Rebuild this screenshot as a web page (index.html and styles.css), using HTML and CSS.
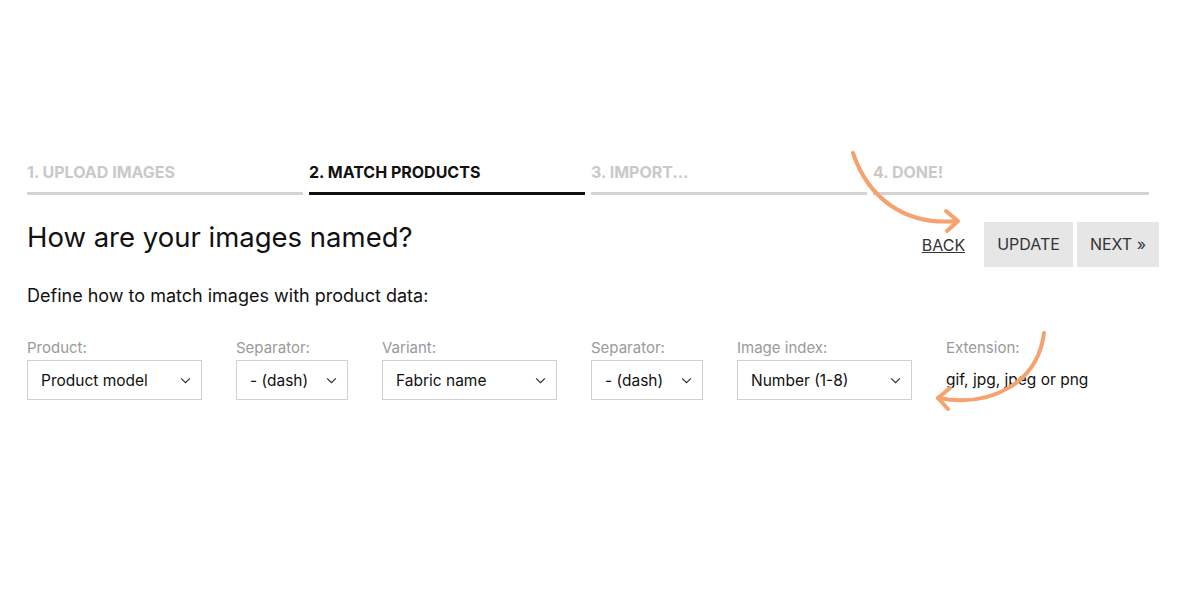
FILE: index.html
```html
<html lang="en">
  <head>
    <meta charset="UTF-8" />
    <title>Match products</title>
    <link rel="stylesheet" href="styles.css">
  </head>
  <body>
    <div class="wizard">
      <!-- steps -->
      <ol class="steps">
        <li>1. UPLOAD IMAGES</li>
        <li class="active">2. MATCH PRODUCTS</li>
        <li>3. IMPORT...</li>
        <li>4. DONE!</li>
      </ol>

      <div class="head">
        <h1>How are your images named?</h1>
        <div class="actions">
          <a href="#" class="back">BACK</a>
          <a href="#" class="btn">UPDATE</a>
          <a href="#" class="btn">NEXT &raquo;</a>
        </div>
      </div>

      <p class="intro">Define how to match images with product data:</p>

      <div class="fields">
        <div class="field wide">
          <label>Product:</label>
          <div class="select">Product model <svg viewBox="0 0 12 8"><path d="M1 1.5 L6 6.5 L11 1.5" /></svg></div>
        </div>
        <div class="field narrow">
          <label>Separator:</label>
          <div class="select">- (dash) <svg viewBox="0 0 12 8"><path d="M1 1.5 L6 6.5 L11 1.5" /></svg></div>
        </div>
        <div class="field wide">
          <label>Variant:</label>
          <div class="select">Fabric name <svg viewBox="0 0 12 8"><path d="M1 1.5 L6 6.5 L11 1.5" /></svg></div>
        </div>
        <div class="field narrow">
          <label>Separator:</label>
          <div class="select">- (dash) <svg viewBox="0 0 12 8"><path d="M1 1.5 L6 6.5 L11 1.5" /></svg></div>
        </div>
        <div class="field wide">
          <label>Image index:</label>
          <div class="select">Number (1-8) <svg viewBox="0 0 12 8"><path d="M1 1.5 L6 6.5 L11 1.5" /></svg></div>
        </div>
        <div class="field">
          <label>Extension:</label>
          <div class="plain">gif, jpg, jpeg or png</div>
        </div>
      </div>
    </div>

    <!-- hand drawn arrows on top -->
    <svg class="arrows" viewBox="0 0 1200 600">
      <path d="M853 153 C 868 198, 905 226, 957 221" />
      <path d="M946 211 L958 221 L947 231" />
      <path d="M1044 333 C 1038 382, 992 408, 938 398" />
      <path d="M950 388 L938 398 L948 409" />
    </svg>
  </body>
</html>
```

FILE: styles.css
```css
* {
  margin: 0;
  padding: 0;
  box-sizing: border-box;
}
body {
  font-family: Inter, "Liberation Sans", sans-serif;
  color: #111;
  background: #fff;
  width: 1200px;
  height: 600px;
  position: relative;
  overflow: hidden;
}
.wizard {
  padding: 163px 41px 0 27px;
}

/* steps */
.steps {
  list-style: none;
  display: flex;
  gap: 6px;
  width: 1122px;
}
.steps li {
  flex: 1;
  font-size: 16px;
  font-weight: bold;
  line-height: 19px;
  color: #c9c9c9;
  padding-bottom: 10px;
  border-bottom: 3px solid #d4d4d4;
}
.steps li.active {
  color: #111;
  border-bottom-color: #111;
}

/* heading + buttons */
.head {
  display: flex;
  justify-content: space-between;
  align-items: flex-start;
  margin-top: 27px;
}
h1 {
  font-size: 27.5px;
  font-weight: normal;
  line-height: 30px;
}
.actions {
  display: flex;
  align-items: center;
  gap: 4px;
}
.actions a {
  font-size: 16px;
  color: #333;
}
.back {
  color: #111;
  text-decoration: underline;
  margin-right: 15px;
}
.btn {
  display: block;
  background: #e6e6e6;
  text-decoration: none;
  height: 45px;
  line-height: 45px;
  padding: 0 13px;
}

.intro {
  font-size: 18px;
  line-height: 22px;
  margin-top: 18px;
}

/* fields */
.fields {
  display: flex;
  gap: 34px;
  margin-top: 32px;
}
.field label {
  display: block;
  font-size: 15px;
  line-height: 18px;
  color: #9a9a9a;
  margin-bottom: 3px;
}
.wide {
  width: 175px;
}
.narrow {
  width: 112px;
}
.select {
  height: 40px;
  border: 1px solid #d0d0d0;
  display: flex;
  align-items: center;
  justify-content: space-between;
  padding: 0 10px 0 13px;
  font-size: 15.5px;
}
.select svg {
  width: 11px;
  height: 7px;
  fill: none;
  stroke: #333;
  stroke-width: 1.4;
}
.plain {
  height: 40px;
  line-height: 40px;
  font-size: 15.5px;
}

.arrows {
  position: absolute;
  top: 0;
  left: 0;
  width: 1200px;
  height: 600px;
  pointer-events: none;
  fill: none;
  stroke: #f6a26e;
  stroke-width: 4;
  stroke-linecap: round;
  stroke-linejoin: round;
}
```
